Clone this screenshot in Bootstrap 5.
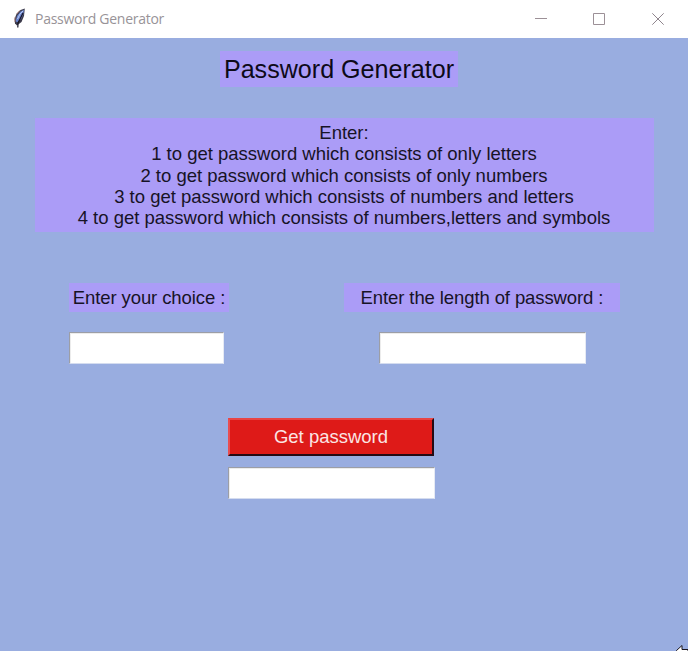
<!DOCTYPE html>
<html lang="en">
<head>
<meta charset="utf-8">
<title>Password Generator</title>
<link rel="stylesheet" href="https://cdn.jsdelivr.net/npm/bootstrap@5.3.0/dist/css/bootstrap.min.css">
<style>
body{width:688px;height:651px;background:#99ade0;font-family:"Liberation Sans",Arial,sans-serif;font-size:18.5px;color:#171326;overflow:hidden}
.titlebar{height:38px;padding-left:12px}
.win-title{font:400 14px/20px "Open Sans","Noto Sans",sans-serif;color:#989398;letter-spacing:-.27px;margin-left:7px}
.win-controls{gap:42px;padding-right:22px}
.tk-label{background:#ab9cf7;text-align:center;white-space:nowrap}
.heading{width:238px;height:36px;font-size:25.1px;line-height:36px;margin:13px 0 0 220px;color:#0d0a18}
.help{width:619px;height:114px;margin:31px 0 0 35px;padding:4px 1px 0 0;line-height:21.3px}
.fields{margin-top:51px;padding-left:69px}
.choice-col{width:275px}
.field-label{height:29px;line-height:29px;letter-spacing:-.1px}
.choice-label{width:160px}
.length-label{width:276px}
.tk-entry{height:32px;border:1px solid;border-color:#9c9ea6 #e6eaf4 #d4dcef #9c9ea6;border-radius:0;background:#fff;padding:0 4px;box-shadow:inset 1px 1px #ececec;outline:0}
.choice-entry{width:155px;margin-top:20px}
.length-entry{width:207px;margin:20px 0 0 35px}
.actions{gap:11px;margin:54px 0 0 228px;width:207px}
.tk-button{width:206px;height:38px;border:2px solid;border-color:#e84444 #240a14 #240a14 #e84c4f;border-radius:0;background:#de1a18;color:#fbe5e4;font-size:18.5px;line-height:34px;padding:0}
.tk-button:hover{background:#de1a18;color:#fbe5e4}
.pointer{right:0;bottom:0}
</style>
<script src="https://cdn.jsdelivr.net/npm/bootstrap@5.3.0/dist/js/bootstrap.bundle.min.js"></script>
</head>
<body class="position-relative">
<header class="titlebar d-flex align-items-center bg-white">
  <svg width="16" height="22" viewBox="0 0 16 22" aria-hidden="true">
    <path d="M12.8 .5 L8.5 2 L4.5 6 L2.5 11 L3 15.5 L5 17.5 L9.5 14 L12 8Z" fill="#3c3a4a"/>
    <path d="M12 1.8 L8.5 3.5 L5 8 L3.7 13 L5 14.5 L9 11 L11.2 6.5Z" fill="#6884cf"/>
    <path d="M11 3 L8 6 L5.5 11" stroke="#bccbf0" fill="none"/>
    <path d="M11 5 L8 11 L6 15 L5.8 19.5" stroke="#171525" stroke-width="1.2" fill="none"/>
    <path d="M3 9 L2.8 14 M7.5 2.5 L4.5 6" stroke="#b98a86" stroke-width=".8"/>
  </svg>
  <span class="win-title">Password Generator</span>
  <div class="win-controls d-flex align-items-center ms-auto">
    <svg width="16" height="16" viewBox="0 0 16 16" stroke="#9c9097" fill="none"><path d="M1 7.5H13"/></svg>
    <svg width="16" height="16" viewBox="0 0 16 16" stroke="#9c9097" fill="none"><path d="M1.5 2.5H12.5V13.5H1.5Z"/></svg>
    <svg width="16" height="16" viewBox="0 0 16 16" stroke="#8f858d" fill="none"><path d="M2.3 2.3L13.7 13.7M13.7 2.3L2.3 13.7"/></svg>
  </div>
</header>
<main class="d-flex flex-column align-items-start">
  <h1 class="tk-label heading fw-normal">Password Generator</h1>
  <div class="tk-label help">Enter:<br>1 to get password which consists of only letters<br>2 to get password which consists of only numbers<br>3 to get password which consists of numbers and letters<br>4 to get password which consists of numbers,letters and symbols</div>
  <div class="fields d-flex">
    <div class="choice-col d-flex flex-column">
      <label class="tk-label field-label choice-label" for="choice">Enter your choice :</label>
      <input class="tk-entry choice-entry" id="choice" type="text">
    </div>
    <div class="d-flex flex-column">
      <label class="tk-label field-label length-label" for="length">Enter the length of password :</label>
      <input class="tk-entry length-entry" id="length" type="text">
    </div>
  </div>
  <div class="actions d-flex flex-column">
    <button class="btn tk-button" type="button">Get password</button>
    <input class="tk-entry w-100" type="text" aria-label="Password">
  </div>
</main>
<svg class="pointer position-absolute" width="12" height="6" viewBox="0 0 12 6" aria-hidden="true"><path d="M.5 5.5L6 .5V4.5H12V6.5H1Z" fill="#fff" stroke="#17131c"/></svg>
</body>
</html>
